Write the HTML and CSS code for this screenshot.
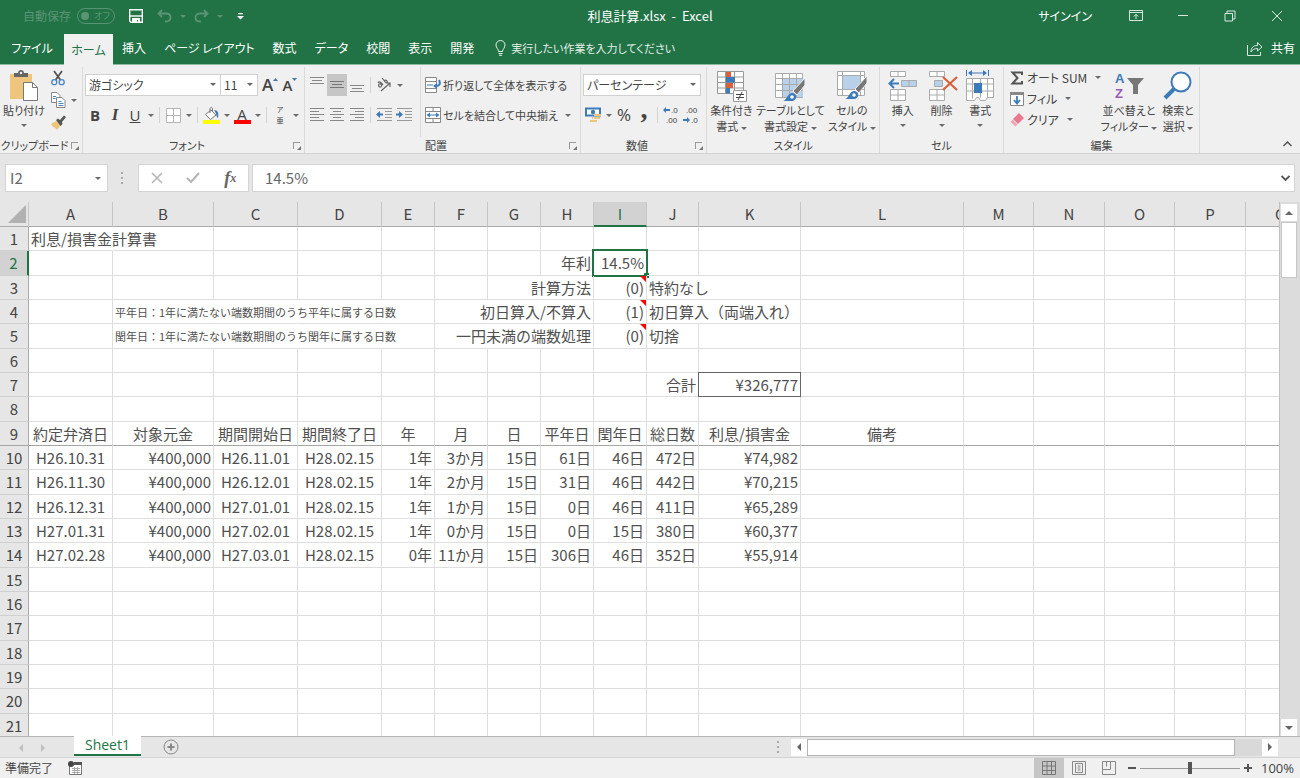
FILE: index.html
```html
<!DOCTYPE html>
<html lang="ja">
<head>
    <meta charset="UTF-8">
    <meta name="viewport" content="width=device-width, initial-scale=1.0">
    <title>利息計算.xlsx - Excel</title>
    <link rel="stylesheet" href="styles.css">
</head>
<body>
    <!-- タイトルバー -->
    <header class="title-bar">
        <div class="quick-access">
            <label class="autosave">自動保存
                <input type="checkbox" disabled>
                <span class="toggle">オフ</span>
            </label>
            <button class="qa-btn" aria-label="上書き保存">
                <svg width="14" height="14" viewBox="0 0 14 14"><path d="M.7.7h12.6v12.6H2L.7 12z" fill="none" stroke="#fff" stroke-width="1.4"/><path d="M1 7h12" stroke="#fff" stroke-width="1.4"/><path d="M3 9h8v5H9v-3H8v3H3z" fill="#fff"/></svg>
            </button>
            <button class="qa-btn dim" aria-label="元に戻す">
                <svg width="15" height="14" viewBox="0 0 15 14"><path d="M5 1 1.500 4.500 5 8M1.500 4.500H9c6 0 6 8 0 8H8" fill="none" stroke="currentColor" stroke-width="1.800"/></svg>
                <i class="caret"></i>
            </button>
            <button class="qa-btn dim" aria-label="やり直し">
                <svg width="15" height="14" viewBox="0 0 15 14"><path d="M10 1l3.500 3.500L10 8M13.500 4.500H6c-6 0-6 8 0 8h1" fill="none" stroke="currentColor" stroke-width="1.800"/></svg>
                <i class="caret"></i>
            </button>
            <button class="qa-btn" aria-label="カスタマイズ">
                <svg width="7" height="7" viewBox="0 0 7 7"><path d="M1 0h5v1.200H1zM0 3h7L3.500 6.500z" fill="#fff"/></svg>
            </button>
        </div>
        <div class="doc-title">利息計算.xlsx&nbsp; -&nbsp; Excel</div>
        <div class="window-buttons">
            <button class="sign-in">サインイン</button>
            <button class="win-btn" aria-label="リボンの表示オプション">
                <svg width="14" height="12" viewBox="0 0 14 12" fill="none" stroke="#d9e8df"><path d="M.5.5h13v10H.5zM.500 2.500h13M7 9V4.500M4.800 6.500 7 4.300l2.200 2.200"/></svg>
            </button>
            <button class="win-btn" aria-label="最小化">
                <svg width="12" height="12" viewBox="0 0 12 12" stroke="#d9e8df"><path d="M1 5.500h10"/></svg>
            </button>
            <button class="win-btn" aria-label="元に戻す(縮小)">
                <svg width="12" height="12" viewBox="0 0 12 12" fill="none" stroke="#d9e8df"><path d="M1 3.500h7.500V11H1zM3 3.500V1h8v8H8.500"/></svg>
            </button>
            <button class="win-btn" aria-label="閉じる">
                <svg width="12" height="12" viewBox="0 0 12 12" stroke="#d9e8df"><path d="M1 1l10 10M11 1 1 11"/></svg>
            </button>
        </div>
    </header>

    <!-- タブ -->
    <nav class="tab-bar">
        <button class="tab file">ファイル</button>
        <button class="tab active">ホーム</button>
        <button class="tab">挿入</button>
        <button class="tab">ページ レイアウト</button>
        <button class="tab">数式</button>
        <button class="tab">データ</button>
        <button class="tab">校閲</button>
        <button class="tab">表示</button>
        <button class="tab">開発</button>
        <label class="tell-me">
            <svg width="11" height="16" viewBox="0 0 11 16" fill="none" stroke="#e4efe8"><path d="M3.500 11.500C3.500 9 1 8 1 5a4.500 4.500 0 0 1 9 0c0 3-2.500 4-2.500 6.500zM3.500 13.500h4M4 15.300h3"/></svg>
            <input type="text" aria-label="操作アシスト" placeholder="実行したい作業を入力してください">
        </label>
        <button class="share">
            <svg width="16" height="15" viewBox="0 0 16 15" fill="none" stroke="#d9e8df"><path d="M.5 4v10.500h13V11M4 11c0-4 2-6.500 6.500-6.500V1.500L15 6l-4.500 4V7.500C7.500 7.500 5.500 8.500 4 11z"/></svg>
            共有
        </button>
    </nav>

    <!-- リボン -->
    <section class="ribbon">
        <div class="group">
            <div class="group-body clipboard">
                <button class="big">
                    <svg width="32" height="32" viewBox="0 0 32 32"><path d="M2 4h22v25H2z" fill="#edc57d"/><path d="M6 3h4c0-4 6-4 6 0h4v4H6z" fill="#666"/><circle cx="13" cy="3" r="1.200" fill="#f0f0f0"/><path d="M15.500 12.500h9l5 5v13h-14z" fill="#fff" stroke="#777"/><path d="M24.500 12.500v5h5" fill="none" stroke="#777"/></svg>
                    <span>貼り付け</span>
                    <i class="caret"></i>
                </button>
                <div class="stack">
                    <button class="tool" aria-label="切り取り">
                        <svg width="14" height="16" viewBox="0 0 14 16" fill="none"><path d="M3 1l6.500 9M11 1 4.500 10" stroke="#555" stroke-width="1.800"/><circle cx="3.300" cy="12.200" r="2.500" stroke="#4a86c5" stroke-width="1.300"/><circle cx="10.700" cy="12.200" r="2.500" stroke="#4a86c5" stroke-width="1.300"/></svg>
                    </button>
                    <div class="pair">
                        <button class="tool" aria-label="コピー">
                            <svg width="15" height="16" viewBox="0 0 15 16" fill="#fff" stroke="#888"><path d="M.5.5H6l3 3v7H.500z"/><path d="M5.500 5.500H11l3 3v7H5.500z"/><path d="M2 4.500h3M2 6.500h2.500M7.500 9.500h3M7.500 11.500h5M7.500 13.500h5" stroke="#4a86c5"/></svg>
                        </button>
                        <button class="drop" aria-label="コピーのオプション"><i class="caret"></i></button>
                    </div>
                    <button class="tool" aria-label="書式のコピー">
                        <svg width="16" height="15" viewBox="0 0 16 15"><path d="M1 9l5-3 5 4-4 5C5 12 3 13 1 9z" fill="#edc57d"/><path d="M6 5l2-1.500 2 1.500 4-4.500 2 1.500-4 5 .5 2-2 2z" fill="#555"/></svg>
                    </button>
                </div>
            </div>
            <div class="group-foot"><span>クリップボード</span><button class="launcher" aria-label="クリップボードの設定"></button></div>
        </div>

        <div class="group">
            <div class="group-body rows">
                <div class="row">
                    <span class="select-wrap font-name"><select aria-label="フォント"><option>游ゴシック</option></select></span>
                    <span class="select-wrap font-size"><select aria-label="フォント サイズ"><option>11</option></select></span>
                    <button class="tool letter grow" aria-label="フォント サイズの拡大">A<svg width="5" height="14" viewBox="0 0 5 14"><path d="M0 3 2.500 0 5 3z" fill="#3d7ab8"/></svg></button>
                    <button class="tool letter shrink" aria-label="フォント サイズの縮小">A<svg width="5" height="14" viewBox="0 0 5 14"><path d="M0 0h5L2.500 3z" fill="#3d7ab8"/></svg></button>
                </div>
                <div class="row">
                    <button class="tool letter"><b>B</b></button>
                    <button class="tool letter italic">I</button>
                    <button class="tool letter"><u>U</u></button>
                    <button class="drop" aria-label="下線"><i class="caret"></i></button>
                    <i class="sep"></i>
                    <button class="tool" aria-label="罫線">
                        <svg width="15" height="15" viewBox="0 0 15 15" fill="#fff" stroke="#b5b5b5"><path d="M.5.500h14v14H.500zM7.500.500v14M.500 7.500h14"/></svg>
                    </button>
                    <button class="drop" aria-label="罫線の種類"><i class="caret"></i></button>
                    <i class="sep"></i>
                    <button class="tool" aria-label="塗りつぶしの色">
                        <svg width="17" height="17" viewBox="0 0 17 17"><path d="M2.500 7.500 8 3l5 5-5.500 4.500z" fill="#fff" stroke="#777"/><path d="M7 6V2c0-2 2.500-2 2.500 0v3" fill="none" stroke="#777"/><path d="M11 3c4 0 5 3 4 8-2-1-1-4-4-8z" fill="#3d7ab8"/><path d="M0 13h17v4H0z" fill="#ff0"/></svg>
                    </button>
                    <button class="drop" aria-label="塗りつぶしの色の選択"><i class="caret"></i></button>
                    <button class="tool font-color" aria-label="フォントの色"><span>A</span></button>
                    <button class="drop" aria-label="フォントの色の選択"><i class="caret"></i></button>
                    <i class="sep"></i>
                    <button class="tool ruby-tool" aria-label="ふりがな"><span>ア</span><span>亜</span></button>
                    <button class="drop" aria-label="ふりがなの設定"><i class="caret"></i></button>
                </div>
            </div>
            <div class="group-foot"><span>フォント</span><button class="launcher" aria-label="フォントの設定"></button></div>
        </div>

        <div class="group">
            <div class="group-body align">
                <div class="rows">
                    <div class="row">
                        <button class="tool" aria-label="上揃え"><svg width="14" height="16" viewBox="0 0 14 16" stroke="#888"><path d="M0 .5h14M2 3.500h10M0 6.500h14"/></svg></button>
                        <button class="tool on" aria-label="上下中央揃え"><svg width="14" height="16" viewBox="0 0 14 16" stroke="#777"><path d="M0 4.500h14M2 7.500h10M0 10.500h14"/></svg></button>
                        <button class="tool" aria-label="下揃え"><svg width="14" height="16" viewBox="0 0 14 16" stroke="#888"><path d="M0 8.500h14M2 11.500h10M0 14.500h14"/></svg></button>
                        <i class="sep"></i>
                        <button class="tool" aria-label="方向"><svg width="15" height="14" viewBox="0 0 15 14" fill="none" stroke="#666" stroke-width="1.200"><path d="M4 13 13 5M13 9V5H9M1 5c1-2 3-1 5 2M4 6c-3-1-3 3-1 3s2-2 1-3M5 0l4 5M7 3c2-2 5 1 2 2"/></svg></button>
                        <button class="drop" aria-label="方向の選択"><i class="caret"></i></button>
                    </div>
                    <div class="row">
                        <button class="tool" aria-label="左揃え"><svg width="14" height="16" viewBox="0 0 14 16" stroke="#888"><path d="M0 1.500h14M0 4.500h9M0 7.500h14M0 10.500h9M0 13.500h14"/></svg></button>
                        <button class="tool" aria-label="中央揃え"><svg width="14" height="16" viewBox="0 0 14 16" stroke="#888"><path d="M0 1.500h14M3 4.500h8M0 7.500h14M3 10.500h8M0 13.500h14"/></svg></button>
                        <button class="tool" aria-label="右揃え"><svg width="14" height="16" viewBox="0 0 14 16" stroke="#888"><path d="M0 1.500h14M5 4.500h9M0 7.500h14M5 10.500h9M0 13.500h14"/></svg></button>
                        <i class="sep"></i>
                        <button class="tool" aria-label="インデントを減らす"><svg width="16" height="16" viewBox="0 0 16 16" stroke="#999"><path d="M1 1.500h15M9 4.500h7M9 7.500h7M9 10.500h7M1 13.500h15"/><path d="M0 7.500 4 4v2.500h3v2H4V11z" fill="#3d7ab8" stroke="none"/></svg></button>
                        <button class="tool" aria-label="インデントを増やす"><svg width="16" height="16" viewBox="0 0 16 16" stroke="#999"><path d="M1 1.500h15M9 4.500h7M9 7.500h7M9 10.500h7M1 13.500h15"/><path d="M7 7.500 3 4v2.500H0v2h3V11z" fill="#3d7ab8" stroke="none"/></svg></button>
                    </div>
                </div>
                <div class="rows wide">
                    <button class="row text-tool">
                        <svg width="16" height="16" viewBox="0 0 16 16" fill="none" stroke="#888"><path d="M.5.500h11v15H.500zM.500 4.500h11M.500 11.500h11" fill="#fff"/><path d="M2 8h6" stroke="#3d7ab8"/><path d="M14 3c2 4 0 6-3 6" stroke="#3d7ab8" stroke-width="2"/><path d="M8 9l4-3v6z" fill="#3d7ab8" stroke="none"/></svg>
                        折り返して全体を表示する
                    </button>
                    <button class="row text-tool">
                        <svg width="16" height="16" viewBox="0 0 16 16" fill="none" stroke="#888"><path d="M.5.500h15v15H.500zM.500 4.500h15M.500 11.500h15M8 .500v4M8 11.500v4" fill="#fff"/><path d="M3 8h10" stroke="#3d7ab8"/><path d="M1.500 8 5 5.500v5zM14.500 8 11 5.500v5z" fill="#3d7ab8" stroke="none"/></svg>
                        セルを結合して中央揃え
                        <i class="caret"></i>
                    </button>
                </div>
            </div>
            <div class="group-foot"><span>配置</span><button class="launcher" aria-label="配置の設定"></button></div>
        </div>

        <div class="group">
            <div class="group-body rows">
                <div class="row">
                    <span class="select-wrap number-format"><select aria-label="表示形式"><option>パーセンテージ</option></select></span>
                </div>
                <div class="row">
                    <button class="tool" aria-label="通貨表示形式"><svg width="17" height="16" viewBox="0 0 17 16"><path d="M1 1.500h14v7H1z" fill="#fff" stroke="#3d7ab8" stroke-width="2"/><circle cx="8" cy="5" r="2.200" fill="#3d7ab8"/><path d="M9 7h7v2H9zM9 10h6v2H9zM5 13h7v2H5zM7 10h1v2H7z" fill="#edc57d"/></svg></button>
                    <button class="drop" aria-label="通貨の選択"><i class="caret"></i></button>
                    <button class="tool percent">%</button>
                    <button class="tool comma">,</button>
                    <i class="sep"></i>
                    <button class="tool decimal" aria-label="小数点以下の表示桁数を増やす"><svg width="16" height="20" viewBox="0 0 16 20"><path d="M0 5 3 2v2h4v2H3v2z" fill="#3d7ab8"/><text x="8" y="8">.0</text><text x="3" y="18">.00</text></svg></button>
                    <button class="tool decimal" aria-label="小数点以下の表示桁数を減らす"><svg width="16" height="20" viewBox="0 0 16 20"><path d="M7 15 4 12v2H0v2h4v2z" fill="#3d7ab8"/><text x="3" y="8">.00</text><text x="8" y="18">.0</text></svg></button>
                </div>
            </div>
            <div class="group-foot"><span>数値</span><button class="launcher" aria-label="数値の設定"></button></div>
        </div>

        <div class="group">
            <div class="group-body bigs">
                <button class="big">
                    <svg width="32" height="32" viewBox="0 0 32 32"><path d="M2.500 1.500h26v22h-26zM2.500 7h26M2.500 12.500h26M2.500 18h26M10.500 1.500v22M19.500 1.500v22" fill="#fff" stroke="#999"/><path d="M11 2h5v5h-5zM11 13h7v5h-7z" fill="#d8603b"/><path d="M11 7h9v5.500h-9zM11 18h4v5.500h-4z" fill="#3d7ab8"/><path d="M18.500 20.500h13v11h-13z" fill="#fff" stroke="#999"/><path d="M21 24.500h8M21 27.500h8M27 22l-4 8" stroke="#444" fill="none"/></svg>
                    <span>条件付き<br>書式 <i class="caret"></i></span>
                </button>
                <button class="big">
                    <svg width="32" height="32" viewBox="0 0 32 32"><path d="M1.500 3.500h27v24h-27z" fill="#fff" stroke="#aaa"/><path d="M9 9h20v18H9z" fill="#b8d0e8"/><path d="M1.500 8.500h27M1.500 14.500h27M1.500 20.500h27M8.500 3.500v24M15.500 3.500v24M22.500 3.500v24" fill="none" stroke="#aaa"/><path d="M31 8v7l-8 10-4-4z" fill="#777" stroke="#f0f0f0"/><path d="M9 31c4-1 4-7 9-8 5 0 6 6 1 8z" fill="#3d7ab8"/><circle cx="18" cy="27" r="1.800" fill="#fff"/></svg>
                    <span>テーブルとして<br>書式設定 <i class="caret"></i></span>
                </button>
                <button class="big">
                    <svg width="32" height="32" viewBox="0 0 32 32"><path d="M1.500 1.500h27v24h-27z" fill="#fff" stroke="#aaa"/><path d="M1.500 5.500h27M1.500 19.500h27M6.500 1.500v24M24.500 1.500v24" fill="none" stroke="#aaa"/><path d="M7 6h17v13H7z" fill="#b8d0e8"/><path d="M31 6v7l-8 10-4-4z" fill="#777" stroke="#f0f0f0"/><path d="M9 29c4-1 4-7 9-8 5 0 6 6 1 8z" fill="#3d7ab8"/><circle cx="18" cy="25" r="1.800" fill="#fff"/></svg>
                    <span>セルの<br>スタイル <i class="caret"></i></span>
                </button>
            </div>
            <div class="group-foot"><span>スタイル</span></div>
        </div>

        <div class="group">
            <div class="group-body bigs">
                <button class="big">
                    <svg width="32" height="32" viewBox="0 0 32 32" fill="#fff" stroke="#aaa"><path d="M3.500 1.500h15v5h-15zM11 1.500v5M3.500 19.500h15v11h-15zM11 19.500v11M3.500 25h15"/><path d="M14.500 10.500h15v6h-15zM22 10.500v6" fill="#b8d0e8"/><path d="M12 13.500H3M7 9l-4.500 4.500L7 18" fill="none" stroke="#3d7ab8" stroke-width="2"/></svg>
                    <span>挿入</span><i class="caret"></i>
                </button>
                <button class="big">
                    <svg width="32" height="32" viewBox="0 0 32 32" fill="#fff" stroke="#aaa"><path d="M3.500 1.500h15v5h-15zM11 1.500v5M3.500 19.500h15v11h-15zM11 19.500v11M3.500 25h15"/><path d="M8.500 10.500h8v6h-8z" fill="#b8d0e8"/><path d="M17 7l14 13M31 7 17 20" stroke="#d8603b" stroke-width="2.200"/></svg>
                    <span>削除</span><i class="caret"></i>
                </button>
                <button class="big">
                    <svg width="32" height="32" viewBox="0 0 32 32" fill="#fff" stroke="#aaa"><path d="M2.500 8.500h27v19h-6l-2 3h-5l-2-3h-2l-2 3h-8zM2.500 14h27M2.500 21h27M8.500 8.500v20M16.500 8.500v19M23.500 8.500v19"/><path d="M10 13h8v10h-8z" fill="#3d7ab8" stroke="none"/><path d="M2.500 0v6M24.500 0v6M5 3h17" stroke="#3d7ab8"/><path d="M4 3l4-3v6zM23 3l-4-3v6z" fill="#3d7ab8" stroke="none"/></svg>
                    <span>書式</span><i class="caret"></i>
                </button>
            </div>
            <div class="group-foot"><span>セル</span></div>
        </div>

        <div class="group">
            <div class="group-body edit">
                <div class="stack left">
                    <button class="text-tool"><svg width="14" height="14" viewBox="0 0 14 14"><path d="M12 4V1.500H2.500L7.500 7l-5 5.500H12V10" fill="none" stroke="#555" stroke-width="2"/></svg>オート SUM <i class="caret"></i></button>
                    <button class="text-tool"><svg width="14" height="14" viewBox="0 0 14 14"><path d="M.5.500h13v13H.500z" fill="#fff" stroke="#888"/><path d="M0 0h14v3H0z" fill="#888"/><path d="M7 4v7M4 8l3 3.500L10 8" fill="none" stroke="#3d7ab8" stroke-width="1.800"/></svg>フィル <i class="caret"></i></button>
                    <button class="text-tool"><svg width="14" height="14" viewBox="0 0 14 14"><path d="M9 0l5 5-6 6-5-5z" fill="#e8798f"/><path d="M2.500 6.500l5 5L5.500 13.500.500 9z" fill="#f0a5b3"/></svg>クリア <i class="caret"></i></button>
                </div>
                <button class="big">
                    <svg width="32" height="32" viewBox="0 0 32 32"><text x="2" y="13" class="sort-a">A</text><text x="2" y="28" class="sort-z">Z</text><path d="M14 8h17l-6 7v9h-5v-9z" fill="#777"/></svg>
                    <span>並べ替えと<br>フィルター <i class="caret"></i></span>
                </button>
                <button class="big find">
                    <svg width="32" height="32" viewBox="0 0 32 32" fill="#fff" stroke="#3d7ab8"><circle cx="19" cy="12" r="9.500" stroke-width="2"/><path d="M12 19 3 28" stroke-width="4"/></svg>
                    <span>検索と<br>選択 <i class="caret"></i></span>
                </button>
            </div>
            <div class="group-foot"><span>編集</span></div>
        </div>
        <button class="collapse" aria-label="リボンを折りたたむ"><svg width="9" height="6" viewBox="0 0 9 6"><path d="M.5 5 4.500 1l4 4" fill="none" stroke="#555" stroke-width="1.500"/></svg></button>
    </section>

    <!-- 数式バー -->
    <section class="formula-bar">
        <div class="name-box"><input type="text" aria-label="名前ボックス" value="I2"><i class="caret"></i></div>
        <i class="dots"></i>
        <div class="formula-buttons">
            <button aria-label="キャンセル"><svg width="12" height="12" viewBox="0 0 12 12"><path d="M1 1l10 10M11 1 1 11" stroke="#b5b5b5" stroke-width="1.500"/></svg></button>
            <button aria-label="入力"><svg width="14" height="12" viewBox="0 0 14 12"><path d="M1 6l4 4 8-9" fill="none" stroke="#b5b5b5" stroke-width="2"/></svg></button>
            <button class="fx" aria-label="関数の挿入">f<small>x</small></button>
        </div>
        <div class="formula-input">
            <input type="text" aria-label="数式バー" value="14.5%">
            <svg width="9" height="6" viewBox="0 0 9 6"><path d="M.5 1 4.500 5l4-4" fill="none" stroke="#555" stroke-width="1.800"/></svg>
        </div>
    </section>

    <!-- シート -->
    <main class="sheet">
        <div class="grid-view">
            <table class="grid" id="grid"></table>
        </div>
        <div class="v-scroll">
            <button class="arrow up" aria-label="上へ"></button>
            <div class="v-thumb"></div>
            <button class="arrow down" aria-label="下へ"></button>
        </div>
    </main>

    <footer class="sheet-bar">
        <div class="sheet-nav"><button class="arrow left" aria-label="前のシート"></button><button class="arrow right" aria-label="次のシート"></button></div>
        <button class="sheet-tab">Sheet1</button>
        <button class="add-sheet" aria-label="新しいシート"><svg width="16" height="16" viewBox="0 0 16 16" fill="none" stroke="#888"><circle cx="8" cy="8" r="7"/><path d="M8 4.500v7M4.500 8h7" stroke-width="2"/></svg></button>
        <div class="h-scroll">
            <i class="dots"></i>
            <button class="arrow left" aria-label="左へ"></button>
            <div class="h-track"><div class="h-thumb"></div></div>
            <button class="arrow right" aria-label="右へ"></button>
        </div>
    </footer>

    <footer class="status-bar">
        <span>準備完了</span>
        <button class="macro" aria-label="マクロの記録"><svg width="14" height="14" viewBox="0 0 14 14"><path d="M1.500 2.500h12v11h-12z" fill="#fff" stroke="#777"/><path d="M6 1h8v3H6z" fill="#555"/><circle cx="3" cy="3" r="3" fill="#444"/><path d="M4 7.500h8M4 9.500h8M4 11.500h8M6.500 6v7M9.500 6v7" stroke="#aaa"/></svg></button>
        <div class="views">
            <button class="view on" aria-label="標準"><svg width="14" height="14" viewBox="0 0 14 14" fill="none" stroke="#777"><path d="M.500.500h13v13H.500zM.500 5h13M.500 9.500h13M5 .500v13M9.500.500v13"/></svg></button>
            <button class="view" aria-label="ページ レイアウト"><svg width="14" height="14" viewBox="0 0 14 14" fill="none" stroke="#888"><path d="M.500.500h13v13H.500zM3.500 2.500h7v9h-7zM5.500 5h3M5.500 7h3M5.500 9h3"/></svg></button>
            <button class="view" aria-label="改ページ プレビュー"><svg width="14" height="14" viewBox="0 0 14 14" fill="none" stroke="#888"><path d="M.500.500h13v13H.500zM.500 8.500h8v-8M4.500.500v5"/></svg></button>
        </div>
        <button class="zoom-btn" aria-label="縮小"><svg width="8" height="8" viewBox="0 0 8 8"><path d="M0 4h8" stroke="#555" stroke-width="2"/></svg></button>
        <input class="zoom" type="range" min="0" max="200" value="100" aria-label="ズーム">
        <button class="zoom-btn" aria-label="拡大"><svg width="8" height="8" viewBox="0 0 8 8"><path d="M0 4h8M4 0v8" stroke="#555" stroke-width="2"/></svg></button>
        <span class="zoom-value">100%</span>
    </footer>

    <script src="script.js"></script>
</body>
</html>
```

FILE: styles.css
```css
* {
    margin: 0;
    padding: 0;
    box-sizing: border-box;
}

body {
    display: flex;
    flex-direction: column;
    height: 100vh;
    overflow: hidden;
    background: #e6e6e6;
    color: #444;
    font-family: 'Noto Sans CJK JP', sans-serif;
    font-size: 12px;
    line-height: 16px;
    font-feature-settings: "palt";
}

button,
input,
select {
    font: inherit;
    font-feature-settings: inherit;
    color: inherit;
    background: none;
    border: none;
    outline: none;
}

button {
    display: flex;
    align-items: center;
    justify-content: center;
    white-space: nowrap;
}

svg {
    flex: none;
}

.caret {
    display: inline-block;
    flex: none;
    border: 3px solid transparent;
    border-top-color: #6a6a6a;
    border-bottom: none;
    vertical-align: middle;
}

/* タイトルバー */
.title-bar {
    display: grid;
    grid-template-columns: 1fr auto 1fr;
    align-items: center;
    height: 32px;
    background: #217346;
    color: #fff;
}

.doc-title {
    font-size: 13px;
}

.quick-access {
    display: flex;
    align-items: center;
    padding-left: 23px;
    gap: 14px;
}

.autosave {
    display: flex;
    align-items: center;
    gap: 6px;
    color: #5b9474;
}

.autosave input {
    position: absolute;
    opacity: 0;
}

.toggle {
    display: flex;
    align-items: center;
    gap: 5px;
    width: 38px;
    height: 16px;
    padding-left: 3px;
    border: 1px solid #5b9474;
    border-radius: 8px;
    font-size: 9px;
    white-space: nowrap;
}

.toggle::before {
    content: "";
    flex: none;
    width: 8px;
    height: 8px;
    border-radius: 50%;
    background: #5b9474;
}

.qa-btn {
    gap: 8px;
}

.qa-btn.dim {
    color: #5b9474;
    margin-right: -6px;
}

.qa-btn.dim .caret {
    border-top-color: #5b9474;
}

.qa-btn:last-child {
    margin-left: 6px;
}

.window-buttons {
    display: flex;
    align-items: center;
    justify-content: flex-end;
}

.sign-in {
    padding: 0 20px;
}

.win-btn {
    width: 47px;
    height: 30px;
}

/* タブ */
.tab-bar {
    display: flex;
    align-items: stretch;
    height: 33px;
    background: #217346;
    color: #fff;
    border-bottom: 1px solid #8fb9a2;
}

.tab {
    padding: 0 9px;
}

.tab.file {
    width: 64px;
}

.tab.active {
    width: 49px;
    margin: 2px 0 -1px;
    padding: 0;
    background: #f0f0f0;
    color: #217346;
}

.tell-me {
    display: flex;
    align-items: center;
    flex: 1;
    gap: 5px;
    padding-left: 12px;
    font-size: 11px;
}

.tell-me input {
    width: 200px;
}

.tell-me input::placeholder {
    color: #e4efe8;
}

.share {
    gap: 8px;
    padding-right: 5px;
}

/* リボン */
.ribbon {
    display: grid;
    grid-template-columns: 83px 222px 276px 126px 173px 124px 196px 1fr;
    height: 89px;
    padding-top: 2px;
    background: #f0f0f0;
    border-bottom: 1px solid #d4d4d4;
    font-size: 11px;
}

.group {
    display: flex;
    flex-direction: column;
    justify-content: space-between;
    border-right: 1px solid #dadada;
}

.group-body {
    display: flex;
    height: 70px;
}

.group-foot {
    display: flex;
    align-items: center;
    height: 16px;
}

.group-foot span {
    flex: 1;
    text-align: center;
    white-space: nowrap;
}

.launcher {
    flex: none;
    width: 7px;
    height: 7px;
    margin: 0 4px 0 2px;
    border: 1px solid #999;
    border-right: none;
    border-bottom: none;
    position: relative;
}

.launcher::after {
    content: "";
    position: absolute;
    right: -1px;
    bottom: -1px;
    border: 2px solid #777;
    border-top-color: transparent;
    border-left-color: transparent;
}

.big {
    flex-direction: column;
    justify-content: flex-start;
    line-height: 16px;
    padding-top: 3px;
}

.big > .caret {
    margin-top: 6px;
}

.clipboard .big {
    width: 48px;
}

.edit .text-tool {
    font-size: 12px;
}

.stack {
    display: flex;
    flex-direction: column;
    gap: 1px;
}

.stack.left {
    gap: 0;
    width: 96px;
    padding-left: 6px;
}

.pair {
    display: flex;
}

.tool {
    width: 20px;
    height: 22px;
}

.stack .tool {
    height: 21px;
}

.tool.on {
    background: #c6c6c6;
}

.drop {
    width: 11px;
    height: 22px;
}

.sep {
    width: 1px;
    height: 16px;
    margin: 0 3px;
    background: #d4d4d4;
}

.rows {
    display: flex;
    flex-direction: column;
    gap: 8px;
    padding: 7px 0 0 2px;
}

.rows.wide {
    flex: 1;
    padding-left: 4px;
    border-left: 1px solid #dadada;
}

.align .rows:first-child {
    width: 115px;
}

.row {
    display: flex;
    align-items: center;
    height: 22px;
}

.text-tool {
    justify-content: flex-start;
    gap: 3px;
    height: 21px;
}

.rows .text-tool {
    height: 22px;
    gap: 2px;
}

.text-tool .caret {
    margin-left: 5px;
}

.select-wrap {
    position: relative;
    height: 22px;
    background: #fff;
    border: 1px solid #d0d0d0;
    font-size: 12px;
}

.select-wrap select {
    appearance: none;
    width: 100%;
    height: 20px;
    padding-left: 3px;
}

.select-wrap::after {
    content: "";
    position: absolute;
    right: 4px;
    top: 8px;
    border: 3px solid transparent;
    border-top-color: #666;
    border-bottom: none;
}

.font-name {
    width: 136px;
}

.font-size {
    width: 38px;
    margin-left: -1px;
}

.number-format {
    width: 118px;
}

.letter {
    font-family: 'Open Sans', sans-serif;
    font-size: 15px;
}

.italic {
    font-family: 'Liberation Serif', serif;
    font-style: italic;
    font-weight: bold;
    font-size: 17px;
}

.letter.grow,
.letter.shrink {
    font-weight: 600;
}

.letter.grow {
    margin-left: 2px;
    font-size: 17px;
}

.font-color {
    font-family: 'Open Sans', sans-serif;
    font-size: 15px;
}

.font-color span {
    width: 17px;
    height: 17px;
    line-height: 14px;
    border-bottom: 4px solid #f00;
}

.ruby-tool {
    flex-direction: column;
    font-size: 7px;
    line-height: 11px;
}

.percent {
    font-family: 'Open Sans', sans-serif;
    font-size: 17px;
}

.comma {
    font-family: 'Liberation Serif', serif;
    font-size: 28px;
    font-weight: bold;
    line-height: 4px;
    padding-bottom: 12px;
}

.decimal {
    font-family: 'Liberation Sans', sans-serif;
    font-size: 8px;
    fill: #444;
}

.bigs {
    justify-content: space-evenly;
}

.edit .big {
    width: 58px;
}

.edit .find {
    width: 40px;
}

.sort-a,
.sort-z {
    font-family: 'Liberation Sans', sans-serif;
    font-size: 13px;
    font-weight: bold;
    fill: #3d7ab8;
}

.sort-z {
    fill: #9b59b6;
}

.collapse {
    align-self: end;
    justify-self: end;
    padding: 6px 8px;
}

/* 数式バー */
.formula-bar {
    display: flex;
    align-items: center;
    height: 48px;
    padding: 0 5px;
    font-size: 15px;
    color: #666;
}

.name-box,
.formula-buttons,
.formula-input {
    display: flex;
    align-items: center;
    height: 28px;
    background: #fff;
    border: 1px solid #d4d4d4;
}

.name-box {
    width: 103px;
    padding: 0 6px 0 4px;
}

.name-box input,
.formula-input input {
    flex: 1;
    min-width: 0;
}

.dots {
    width: 2px;
    height: 12px;
    background: repeating-linear-gradient(#aaa 0 2px, transparent 2px 5px);
}

.formula-bar .dots {
    margin: 0 15px 0 13px;
}

.formula-buttons {
    width: 111px;
    justify-content: space-around;
    margin-right: 3px;
}

.fx {
    font-family: 'Liberation Serif', serif;
    font-style: italic;
    font-weight: bold;
    font-size: 18px;
}

.fx small {
    font-size: 12px;
    align-self: flex-end;
}

.formula-input {
    flex: 1;
    padding: 0 4px 0 12px;
}

/* シート */
.sheet {
    display: flex;
    flex: 1;
    min-height: 0;
}

.grid-view {
    flex: 1;
    min-width: 0;
    overflow: hidden;
    background: linear-gradient(#e6e6e6 25px, #fff 25px);
    border-right: 1px solid #c0c0c0;
}

.grid {
    table-layout: fixed;
    width: 0;
    border-collapse: separate;
    border-spacing: 0;
    font-size: 15px;
    line-height: 22px;
    font-feature-settings: normal;
}

.grid tr {
    height: 24px;
}

.grid tr:nth-child(3n+2) {
    height: 25px;
}

.grid th {
    background: #e6e6e6;
    font-weight: normal;
    color: #444;
    border-right: 1px solid #c6c6c6;
}

.grid thead th {
    height: 25px;
    border-bottom: 1px solid #ababab;
}

.grid tbody th {
    border-right-color: #ababab;
    border-bottom: 1px solid #d0d0d0;
}

.grid thead th.current {
    background: #d2d2d2;
    color: #217346;
    border-bottom: 2px solid #217346;
}

.grid tbody th.current {
    background: #d2d2d2;
    color: #217346;
    border-right: 2px solid #217346;
}

.corner svg {
    display: block;
    margin: 0 2px 0 auto;
}

.grid td {
    position: relative;
    color: #505050;
    border-right: 1px solid #dedede;
    border-bottom: 1px solid #dedede;
}

.grid td.open {
    border-right-color: transparent;
}

.grid .frozen > * {
    border-bottom-color: #a6a6a6;
}

.cell {
    display: flex;
    padding: 0 2px;
    height: 22px;
    white-space: nowrap;
}

.cell.right {
    justify-content: flex-end;
}

.cell.center {
    justify-content: center;
}

.cell.small {
    font-size: 11px;
}

.note::after {
    content: "";
    position: absolute;
    top: 0;
    right: 0;
    border: 3px solid #f00;
    border-left-color: transparent;
    border-bottom-color: transparent;
}

.selected::before {
    content: "";
    position: absolute;
    inset: -2px;
    border: 2px solid #217346;
}

.selected::after {
    content: "";
    position: absolute;
    right: -3px;
    bottom: -3px;
    width: 5px;
    height: 5px;
    background: #217346;
}

.boxed::before {
    content: "";
    position: absolute;
    inset: -1px;
    border: 1px solid #666;
}

/* スクロールバー */
.v-scroll {
    display: flex;
    flex-direction: column;
    width: 20px;
    padding: 2px 3px 0 1px;
    background: #dcdcdc;
}

.arrow {
    flex: none;
    width: 16px;
    height: 17px;
    background: #fff;
}

.arrow::before {
    content: "";
    border: 4px solid transparent;
}

.arrow.up::before {
    border-bottom-color: #666;
    border-top: none;
}

.arrow.down::before {
    border-top-color: #666;
    border-bottom: none;
}

.arrow.left::before {
    border-right-color: #666;
    border-left: none;
}

.arrow.right::before {
    border-left-color: #666;
    border-right: none;
}

.v-thumb {
    height: 56px;
    margin-top: 1px;
    background: #fff;
    border: 1px solid #c6c6c6;
}

.arrow.down {
    margin-top: auto;
}

.sheet-bar {
    display: flex;
    height: 22px;
    border-top: 1px solid #b5b5b5;
    border-bottom: 1px solid #d4d4d4;
}

.sheet-nav {
    display: flex;
    gap: 6px;
    width: 74px;
    padding: 2px 0 0 13px;
}

.sheet-nav .arrow {
    background: none;
    opacity: .3;
}

.sheet-tab {
    width: 67px;
    height: 20px;
    margin-top: -1px;
    background: #fff;
    border-bottom: 2px solid #217346;
    color: #217346;
    font-family: 'Open Sans', sans-serif;
    font-size: 14px;
}

.add-sheet {
    margin-left: 22px;
}

.h-scroll {
    display: flex;
    align-items: center;
    width: 41%;
    margin-left: auto;
    padding-right: 22px;
}

.h-scroll .dots {
    margin: 0 12px 0 10px;
}

.h-track {
    flex: 1;
    height: 17px;
    background: #d9d9d9;
}

.h-thumb {
    width: 94%;
    height: 17px;
    background: #fff;
    border: 1px solid #b5b5b5;
}

/* ステータスバー */
.status-bar {
    display: flex;
    align-items: center;
    height: 20px;
    padding: 0 6px 0 5px;
    background: #f0f0f0;
}

.macro {
    margin-left: 15px;
}

.views {
    display: flex;
    margin-left: auto;
}

.view {
    width: 30px;
    height: 20px;
}

.view.on {
    background: #c6c6c6;
}

.zoom-btn {
    margin: 0 4px;
}

.zoom {
    appearance: none;
    width: 100px;
    height: 12px;
    background: linear-gradient(#999, #999) center / 100% 1px no-repeat;
}

.zoom::-webkit-slider-thumb {
    appearance: none;
    width: 4px;
    height: 12px;
    background: #555;
}

.zoom-value {
    margin-left: 5px;
    font-family: 'Open Sans', sans-serif;
    font-size: 13px;
}
```

FILE: script.js
```js
const widths = { A: 84, B: 101, C: 84, D: 84, E: 53, F: 53, G: 53, H: 53, I: 53, J: 52, K: 102, L: 163, M: 70, N: 71, O: 70, P: 71, Q: 70 };
const columns = Object.keys(widths);
const rowCount = 21;

// 値と書式
const cells = {
    A1: ['利息/損害金計算書', ''],
    H2: ['年利', 'right'],
    I2: ['14.5%', 'right'],
    H3: ['計算方法', 'right'],
    I3: ['(0)', 'right'],
    J3: ['特約なし', ''],
    B4: ['平年日：1年に満たない端数期間のうち平年に属する日数', 'small'],
    H4: ['初日算入/不算入', 'right'],
    I4: ['(1)', 'right'],
    J4: ['初日算入（両端入れ）', ''],
    B5: ['閏年日：1年に満たない端数期間のうち閏年に属する日数', 'small'],
    H5: ['一円未満の端数処理', 'right'],
    I5: ['(0)', 'right'],
    J5: ['切捨', ''],
    J7: ['合計', 'right'],
    K7: ['¥326,777', 'right']
};

const headers = ['約定弁済日', '対象元金', '期間開始日', '期間終了日', '年', '月', '日', '平年日', '閏年日', '総日数', '利息/損害金', '備考'];
headers.forEach((text, i) => { cells[columns[i] + 9] = [text, 'center']; });

const records = [
    ['H26.10.31', '¥400,000', 'H26.11.01', 'H28.02.15', '1年', '3か月', '15日', '61日', '46日', '472日', '¥74,982'],
    ['H26.11.30', '¥400,000', 'H26.12.01', 'H28.02.15', '1年', '2か月', '15日', '31日', '46日', '442日', '¥70,215'],
    ['H26.12.31', '¥400,000', 'H27.01.01', 'H28.02.15', '1年', '1か月', '15日', '0日', '46日', '411日', '¥65,289'],
    ['H27.01.31', '¥400,000', 'H27.02.01', 'H28.02.15', '1年', '0か月', '15日', '0日', '15日', '380日', '¥60,377'],
    ['H27.02.28', '¥400,000', 'H27.03.01', 'H28.02.15', '0年', '11か月', '15日', '306日', '46日', '352日', '¥55,914']
];
records.forEach((record, r) => {
    record.forEach((text, i) => {
        cells[columns[i] + (10 + r)] = [text, text.startsWith('H') ? 'center' : 'right'];
    });
});

// 文字がはみ出すセルは右の枠線を消す
const open = ['A1', 'G3', 'J3', 'B4', 'C4', 'D4', 'F4', 'G4', 'J4', 'B5', 'C5', 'D5', 'F5', 'G5'];
const marks = { I2: 'selected', I3: 'note', I4: 'note', I5: 'note', K7: 'boxed' };

let html = '<colgroup><col style="width:29px">';
columns.forEach(c => { html += `<col style="width:${widths[c]}px">`; });
html += '</colgroup><thead><tr><th class="corner"><svg width="18" height="18" viewBox="0 0 18 18"><path d="M18 0v18H0z" fill="#b1b1b1"/></svg></th>';
columns.forEach(c => { html += `<th class="${c === 'I' ? 'current' : ''}">${c}</th>`; });
html += '</tr></thead><tbody>';

for (let r = 1; r <= rowCount; r++) {
    html += `<tr class="${r === 9 ? 'frozen' : ''}"><th class="${r === 2 ? 'current' : ''}">${r}</th>`;
    columns.forEach(c => {
        const id = c + r;
        const cls = [open.includes(id) ? 'open' : '', marks[id] || ''].join(' ').trim();
        const content = cells[id] ? `<div class="cell ${cells[id][1]}">${cells[id][0]}</div>` : '';
        html += `<td class="${cls}">${content}</td>`;
    });
    html += '</tr>';
}

document.getElementById('grid').innerHTML = html + '</tbody>';
```
